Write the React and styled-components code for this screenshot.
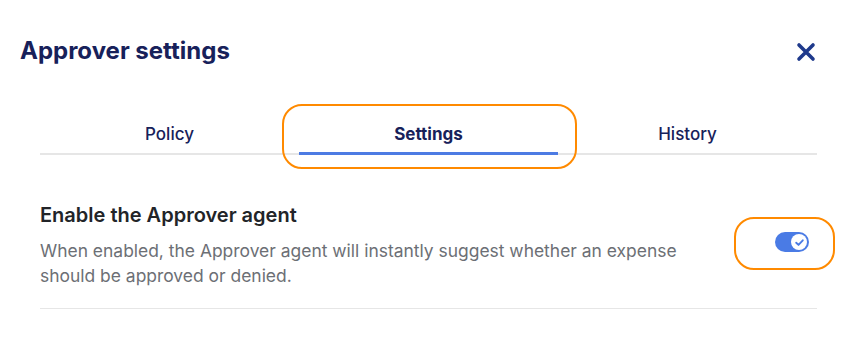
import React, { useState } from "react";
import styled, { createGlobalStyle } from "styled-components";

const GlobalStyle = createGlobalStyle`
  body {
    margin: 0;
    background: #ffffff;
    font-family: Inter, "Noto Sans", sans-serif;
  }
`;

const Panel = styled.div`
  width: 862px;
  height: 356px;
  background: #ffffff;
  box-sizing: border-box;
`;

const Header = styled.div`
  display: flex;
  align-items: center;
  justify-content: space-between;
  padding: 36px 46px 0 20px;
  height: 30px;
`;

const Title = styled.h1`
  margin: 0;
  font-size: 24px;
  line-height: 30px;
  font-weight: 700;
  color: #17215a;
`;

const CloseButton = styled.button`
  border: 0;
  background: none;
  padding: 0;
  margin-top: 2px;
  width: 20px;
  height: 20px;
  display: flex;
  cursor: pointer;
`;

const Body = styled.div`
  padding: 0 45px 0 40px;
`;

const Tabs = styled.div`
  margin-top: 50px;
  display: grid;
  grid-template-columns: repeat(3, 1fr);
  border-bottom: 2px solid #e6e6e6;
`;

const TabWrap = styled.div`
  position: relative;
`;

const Tab = styled.button`
  width: 100%;
  border: 0;
  background: none;
  font-family: inherit;
  font-size: 17px;
  font-weight: ${(p) => (p.$active ? 700 : 500)};
  color: #17215a;
  height: 39px;
  padding: 0;
  margin-bottom: -2px;
  border-bottom: 3px solid ${(p) => (p.$active ? "#4d7be3" : "transparent")};
  cursor: pointer;
`;

const Highlight = styled.div`
  position: absolute;
  border: 2.5px solid #ff8a00;
  border-radius: 20px;
  pointer-events: none;
  top: ${(p) => p.$top}px;
  bottom: ${(p) => p.$bottom}px;
  left: ${(p) => p.$left}px;
  right: ${(p) => p.$right}px;
`;

const SettingRow = styled.div`
  display: flex;
  align-items: flex-start;
  justify-content: space-between;
  padding: 47px 0 20px;
  border-bottom: 1px solid #e6e6e6;
`;

const SettingText = styled.div`
  max-width: 660px;
`;

const SettingTitle = styled.div`
  font-size: 20px;
  font-weight: 600;
  color: #222428;
  line-height: 26px;
`;

const SettingDesc = styled.p`
  margin: 10px 0 0;
  font-size: 17.45px;
  line-height: 25px;
  color: #6c6f75;
`;

const ToggleWrap = styled.div`
  position: relative;
  margin: 30px 8px 0 0;
`;

const Toggle = styled.button`
  width: 34px;
  height: 20px;
  border: 0;
  padding: 2px;
  border-radius: 10px;
  background: ${(p) => (p.$on ? "#4a7be5" : "#c8cbd0")};
  display: flex;
  justify-content: ${(p) => (p.$on ? "flex-end" : "flex-start")};
  align-items: center;
  cursor: pointer;
`;

const Knob = styled.span`
  width: 16px;
  height: 16px;
  border-radius: 50%;
  background: #ffffff;
  display: flex;
  align-items: center;
  justify-content: center;
`;

export default function App() {
  const [tab, setTab] = useState("Settings");
  const [on, setOn] = useState(true);
  const tabs = ["Policy", "Settings", "History"];

  return (
    <Panel>
      <GlobalStyle />
      <Header>
        <Title>Approver settings</Title>
        <CloseButton aria-label="Close">
          <svg width="20" height="20" viewBox="0 0 20 20">
            <path
              d="M3 3L17 17M17 3L3 17"
              stroke="#1f3a8c"
              strokeWidth="3.6"
              strokeLinecap="round"
            />
          </svg>
        </CloseButton>
      </Header>
      <Body>
        <Tabs>
          {tabs.map((t) => (
            <TabWrap key={t}>
              <Tab $active={tab === t} onClick={() => setTab(t)}>
                {t}
              </Tab>
              {t === "Settings" && (
                <Highlight $top={-12} $bottom={-16} $left={-17} $right={-19} />
              )}
            </TabWrap>
          ))}
        </Tabs>
        <SettingRow>
          <SettingText>
            <SettingTitle>Enable the Approver agent</SettingTitle>
            <SettingDesc>
              When enabled, the Approver agent will instantly suggest whether an
              expense should be approved or denied.
            </SettingDesc>
          </SettingText>
          <ToggleWrap>
            <Toggle $on={on} onClick={() => setOn(!on)} aria-label="Toggle">
              <Knob>
                <svg width="11" height="11" viewBox="0 0 10 10">
                  <path
                    d="M2 5.2L4.1 7.2L8 3"
                    fill="none"
                    stroke="#4a7be5"
                    strokeWidth="1.7"
                    strokeLinecap="round"
                    strokeLinejoin="round"
                  />
                </svg>
              </Knob>
            </Toggle>
            <Highlight $top={-15} $bottom={-18} $left={-41} $right={-26} />
          </ToggleWrap>
        </SettingRow>
      </Body>
    </Panel>
  );
}
